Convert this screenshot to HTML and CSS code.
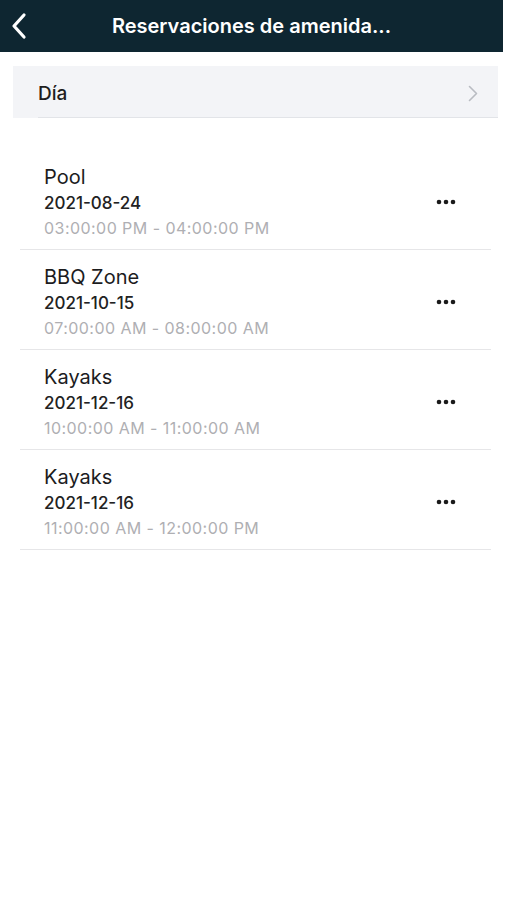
FILE: index.html
```html
<!DOCTYPE html>
<html lang="es">
<head>
<meta charset="utf-8">
<link rel="stylesheet" href="styles.css">
</head>
<body>
<header class="topbar">
  <button class="back" aria-label="Atrás">
    <svg width="18" height="28" viewBox="0 0 18 28"><path d="M14 3 L4 14 L14 25" fill="none" stroke="#fff" stroke-width="3.2" stroke-linecap="round" stroke-linejoin="round"/></svg>
  </button>
  <h1 class="title">Reservaciones de amenida...</h1>
</header>

<section class="filter">
  <div class="filter-row">
    <span class="filter-label">Día</span>
    <svg class="chev" width="10" height="17" viewBox="0 0 10 17"><path d="M1.5 1.5 L8.5 8.5 L1.5 15.5" fill="none" stroke="#b9bcc2" stroke-width="1.6" stroke-linecap="round" stroke-linejoin="round"/></svg>
  </div>
</section>

<ul class="list">
  <li class="item">
    <div class="info">
      <div class="name">Pool</div>
      <div class="date">2021-08-24</div>
      <div class="time">03:00:00 PM - 04:00:00 PM</div>
    </div>
    <svg class="more" width="20" height="6" viewBox="0 0 20 6"><circle cx="3" cy="3" r="2.3"/><circle cx="10" cy="3" r="2.3"/><circle cx="17" cy="3" r="2.3"/></svg>
  </li>
  <li class="item">
    <div class="info">
      <div class="name">BBQ Zone</div>
      <div class="date">2021-10-15</div>
      <div class="time">07:00:00 AM - 08:00:00 AM</div>
    </div>
    <svg class="more" width="20" height="6" viewBox="0 0 20 6"><circle cx="3" cy="3" r="2.3"/><circle cx="10" cy="3" r="2.3"/><circle cx="17" cy="3" r="2.3"/></svg>
  </li>
  <li class="item">
    <div class="info">
      <div class="name">Kayaks</div>
      <div class="date">2021-12-16</div>
      <div class="time">10:00:00 AM - 11:00:00 AM</div>
    </div>
    <svg class="more" width="20" height="6" viewBox="0 0 20 6"><circle cx="3" cy="3" r="2.3"/><circle cx="10" cy="3" r="2.3"/><circle cx="17" cy="3" r="2.3"/></svg>
  </li>
  <li class="item">
    <div class="info">
      <div class="name">Kayaks</div>
      <div class="date">2021-12-16</div>
      <div class="time">11:00:00 AM - 12:00:00 PM</div>
    </div>
    <svg class="more" width="20" height="6" viewBox="0 0 20 6"><circle cx="3" cy="3" r="2.3"/><circle cx="10" cy="3" r="2.3"/><circle cx="17" cy="3" r="2.3"/></svg>
  </li>
</ul>
</body>
</html>
```

FILE: styles.css
```css
* { box-sizing: border-box; }
html, body { margin: 0; padding: 0; background: #fff; }
body {
  font-family: Inter, "Noto Sans", "Liberation Sans", sans-serif;
  color: #1c1c1e;
  width: 507px;
}

.topbar {
  width: 503px;
  height: 52px;
  background: #0e2631;
  display: flex;
  align-items: center;
}
.back {
  background: none;
  border: 0;
  padding: 0;
  margin-left: 10px;
  width: 20px;
  height: 28px;
  display: flex;
  align-items: center;
  cursor: pointer;
}
.title {
  flex: 1;
  margin: 0;
  padding-right: 30px;
  text-align: center;
  color: #fff;
  font-size: 20px;
  font-weight: 600;
  letter-spacing: 0;
}

.filter {
  margin: 14px 9px 0 13px;
  background: #f3f4f7;
}
.filter-row {
  height: 52px;
  margin-left: 25px;
  padding: 3px 20px 0 0;
  display: flex;
  align-items: center;
  justify-content: space-between;
  border-bottom: 1px solid #e2e4e8;
}
.filter-label {
  font-size: 19px;
  font-weight: 500;
  color: #1e1e20;
}

.list {
  list-style: none;
  margin: 32px 16px 0 20px;
  padding: 0;
}
.item {
  height: 100px;
  padding: 16px 35px 8px 24px;
  border-bottom: 1px solid #e6e6e8;
  display: flex;
  align-items: center;
  justify-content: space-between;
}
.info { display: flex; flex-direction: column; align-self: flex-start; }
.name { font-size: 20px; line-height: 25px; color: #1c1c1e; margin-top: -1px; margin-bottom: 1px; }
.date { font-size: 17px; line-height: 25px; color: #222; font-weight: 500; }
.time { font-size: 16px; line-height: 25px; color: #afafb3; letter-spacing: 0.45px; }
.more { fill: #1a1a1a; margin-top: -4px; }
```
